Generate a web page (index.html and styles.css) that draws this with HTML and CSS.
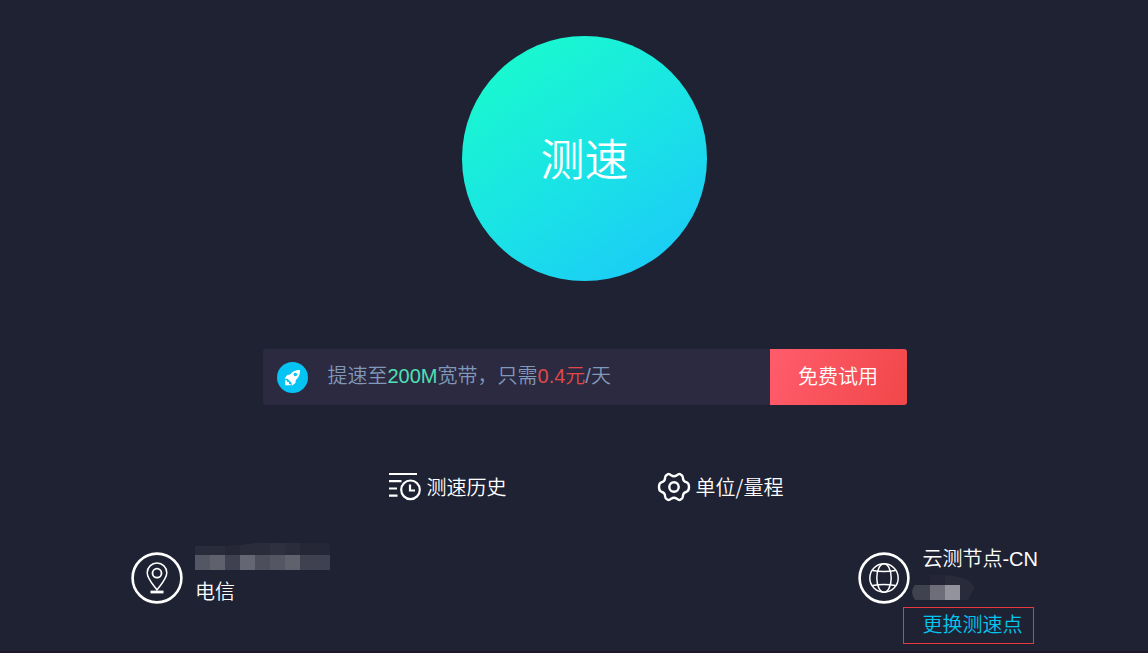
FILE: index.html
```html
<!DOCTYPE html>
<html lang="zh-CN">
<head>
  <meta charset="UTF-8" />
  <meta name="viewport" content="width=device-width, initial-scale=1.0"/>
  <title>测速</title>
  <link rel="stylesheet" href="styles.css">
</head>
<body>
  <main class="page">
    <button type="button" class="start-btn">测速</button>

    <div class="promo">
      <svg class="promo-icon" viewBox="0 0 31 31" aria-hidden="true">
        <circle cx="15.5" cy="15.5" r="15.5" fill="#05c3f2"/>
        <path d="M23 8c-4.400-.2-7.600 1.500-9.900 4.500l-2.900.5-2.700 3.700 3.100.1 3.900 3.900.3 3 3.600-2.700.5-3.100c2.800-2.200 4.400-5.500 4.100-9.900z" fill="#fff"/>
        <circle cx="18.400" cy="12.500" r="1.700" fill="#05c3f2"/>
        <path d="M8.200 18.200l1.700.1.200 1.700 1.700.1.300 1.800 1.600.2-.2 1.200-5.300-.1z" fill="#fff"/>
      </svg>
      <p class="promo-text">提速至<span class="speed">200M</span>宽带，只需<span class="price">0.4元</span>/天</p>
      <button type="button" class="trial-btn">免费试用</button>
    </div>

    <nav class="tools">
      <a href="#history" class="tool">
        <svg width="34" height="30" viewBox="0 0 34 30" fill="none" stroke="#fff" stroke-width="2.200" aria-hidden="true">
          <path d="M1 2h28M1 9.200h12.500M1 16.500h8M1 23.700h8.500"/>
          <circle cx="22.500" cy="17.800" r="9.300"/>
          <path d="M22 12.500v6h5"/>
        </svg>
        <span>测速历史</span>
      </a>
      <a href="#unit" class="tool">
        <svg width="34" height="30" viewBox="0 0 34 30" fill="none" stroke="#fff" stroke-width="2.400" stroke-linejoin="round" aria-hidden="true">
          <path d="M10.500 2.300C12 1.500 13.300 2.500 14.200 3.300Q17 5.300 19.800 3.300C20.700 2.500 22 1.500 23.500 2.300Q25.800 3.300 25.900 5.500C25.900 8.500 27.200 9.800 29.700 10.300Q32 11 32 15Q32 19 29.700 19.700C27.200 20.200 25.900 21.500 25.900 24.500Q25.800 26.700 23.500 27.700C22 28.500 20.700 27.500 19.800 26.700Q17 24.700 14.200 26.700C13.300 27.500 12 28.500 10.500 27.700Q8.200 26.700 8.100 24.500C8.100 21.500 6.800 20.200 4.300 19.700Q2 19 2 15Q2 11 4.300 10.300C6.800 9.800 8.100 8.500 8.100 5.500Q8.200 3.300 10.500 2.300Z"/>
          <circle cx="17" cy="15" r="4.700"/>
        </svg>
        <span>单位/量程</span>
      </a>
    </nav>

    <div class="endpoints">
      <section class="endpoint">
        <svg class="endpoint-icon" viewBox="0 0 52 52" fill="none" stroke="#fff" aria-hidden="true">
          <circle cx="26" cy="26" r="24.400" stroke-width="2.600"/>
          <path d="M26 38C21.500 32 16.200 26.500 16.200 20.800a9.800 9.800 0 0 1 19.600 0C35.800 26.500 30.500 32 26 38z" stroke-width="1.500"/>
          <circle cx="26" cy="21.200" r="4.500" stroke-width="1.800"/>
          <path d="M19.500 40h13" stroke-width="2.800"/>
        </svg>
        <div class="endpoint-info">
          <svg class="mask" width="135" height="28" aria-hidden="true">
            <path d="M0 3h30l15-1 15-2h66q9 0 9 4v8H0z" fill="#2a2b3b"/>
            <path d="M30 3l15-1v10H30zM105 0h21q9 0 9 4v8h-30z" fill="#252737"/>
            <path d="M75 0h15v12H75z" fill="#2f303f"/>
            <path d="M0 12h15v15H0zM75 12h15v15H75z" fill="#555664"/>
            <path d="M15 12h15v15H15zM90 12h15v15H90z" fill="#5f616d"/>
            <path d="M30 12h15v15H30zM105 12h30v15h-30z" fill="#404150"/>
            <path d="M45 12h15v15H45z" fill="#656673"/>
            <path d="M60 12h15v15H60z" fill="#4d4e5c"/>
          </svg>
          <p class="isp">电信</p>
        </div>
      </section>

      <section class="endpoint">
        <svg class="endpoint-icon" viewBox="0 0 52 52" fill="none" stroke="#fff" aria-hidden="true">
          <circle cx="26" cy="26" r="24.400" stroke-width="2.600"/>
          <g stroke-width="1.500">
            <circle cx="26" cy="26" r="14.200"/>
            <ellipse cx="26" cy="26" rx="7.200" ry="14.200"/>
            <path d="M14.500 18.500q11.500 2 23 0M14.500 33.500q11.500-2 23 0"/>
          </g>
        </svg>
        <div class="endpoint-info">
          <p class="node-name">云测节点-CN</p>
          <svg class="mask mask-node" width="62" height="28" aria-hidden="true">
            <path d="M18 0h15v10H18z" fill="#242638"/>
            <path d="M33 0q29 3 29 13l-6 12H48V10H33z" fill="#292b3b"/>
            <path d="M3 10h15v15H3q-3-4-3-8t3-7z" fill="#41424f"/>
            <path d="M18 10h15v15H18z" fill="#6d6e7a"/>
            <path d="M33 10h15v15H33z" fill="#92939c"/>
          </svg>
          <a href="#nodes" class="change-node">更换测速点</a>
        </div>
      </section>
    </div>
  </main>
</body>
</html>
```

FILE: styles.css
```css
* {
  box-sizing: border-box;
}

body {
  margin: 0;
  min-height: 100vh;
  background: #1f2233;
  border-bottom: 2px solid #1d172b;
  color: #fff;
  font-family: "Noto Sans CJK SC", sans-serif;
  font-size: 20px;
  font-weight: 350;
  line-height: 28px;
}

p {
  margin: 0;
}

a {
  color: inherit;
  text-decoration: none;
}

button {
  border: none;
  color: #fff;
  font: inherit;
  cursor: pointer;
}

svg {
  display: block;
  flex: none;
}

.page {
  display: flex;
  flex-direction: column;
  align-items: center;
  padding: 36px 110px 0 131px;
}

.start-btn {
  width: 245px;
  height: 245px;
  padding: 0 0 4px;
  border-radius: 50%;
  background: linear-gradient(145deg, #19ffc8, #1ae4e4 50%, #1bc6fb);
  font-size: 44px;
}

.promo {
  display: flex;
  align-items: center;
  width: 100%;
  max-width: 644px;
  height: 56px;
  margin-top: 68px;
  padding-left: 14px;
  background: #2b2a41;
  border-radius: 3px;
  overflow: hidden;
}

.promo-icon {
  width: 31px;
  height: 31px;
}

.promo-text {
  flex: 1;
  margin-left: 20px;
  padding-bottom: 2px;
  color: #8198b9;
  font-family: "Liberation Sans", "Noto Sans CJK SC", sans-serif;
}

.speed {
  color: #4fe0b5;
}

.price {
  color: #e04848;
}

.trial-btn {
  align-self: stretch;
  min-width: 137px;
  padding: 0 20px 2px;
  background: linear-gradient(110deg, #ff5c6c, #f14749);
}

.tools {
  display: flex;
  gap: 150px;
  margin-top: 67px;
  padding-left: 2px;
}

.tool {
  display: flex;
  align-items: center;
  gap: 5px;
}

.endpoints {
  display: flex;
  justify-content: space-between;
  width: 100%;
  margin-top: 41px;
}

.endpoint {
  display: flex;
  gap: 12px;
}

.endpoint-icon {
  width: 52px;
  height: 52px;
  margin-top: 9px;
}

.endpoint-info {
  display: flex;
  flex-direction: column;
}

.isp {
  margin-top: 6px;
}

.node-name {
  padding-top: 2px;
  font-family: "Liberation Sans", "Noto Sans CJK SC", sans-serif;
}

.mask-node {
  margin: 2px 0 4px -10px;
}

.change-node {
  align-self: flex-start;
  margin-left: -19px;
  padding: 2px 11px 5px 18px;
  border: 1px solid #e5393d;
  color: #00c8f0;
}
```
